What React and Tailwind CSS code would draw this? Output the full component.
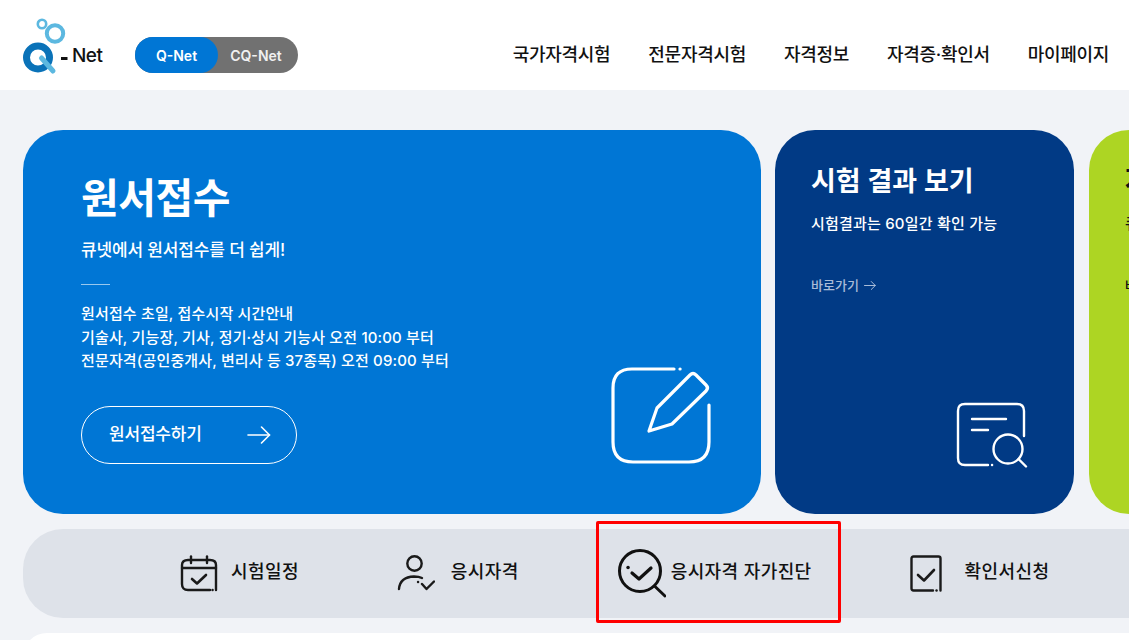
const font = { fontFamily: 'Inter, "Noto Sans CJK KR", sans-serif' };

function Logo() {
  return (
    <div className="relative w-[84px] h-[60px]">
      <svg width="84" height="60" viewBox="0 0 84 60" className="absolute left-0 top-0">
        <circle cx="19" cy="6" r="4.2" fill="none" stroke="#5cb8e0" strokeWidth="2.6" />
        <circle cx="32" cy="15.5" r="8.2" fill="none" stroke="#5cb8e0" strokeWidth="4" />
        <circle cx="15" cy="39.5" r="11.5" fill="none" stroke="#0a72b8" strokeWidth="7" />
        <path d="M18.5 40 L30 53" stroke="#5cb8e0" strokeWidth="5" strokeLinecap="round" />
        <rect x="38" y="39" width="6.5" height="3" fill="#111" />
      </svg>
      <span className="absolute left-[49px] top-[25px] text-[19px] leading-[26px] font-medium text-[#111] tracking-[-0.5px]">Net</span>
    </div>
  );
}

function EditIcon() {
  return (
    <svg width="102" height="100" viewBox="0 0 102 100" fill="none" stroke="#fff" strokeWidth="3.2" strokeLinecap="round" strokeLinejoin="round">
      <path d="M64 3 H22 Q3 3 3 22 V76 Q3 96 23 96 H79 Q99 96 99 76 V39" />
      <path d="M70 3 h0.1" />
      <path d="M47 42 L80 9 Q83 6 86 9 L96 19 Q99 22 96 25 L62 58 L39 65 Z" />
    </svg>
  );
}

function ResultIcon() {
  return (
    <svg width="72" height="66" viewBox="0 0 72 66" fill="none" stroke="#fff" strokeWidth="2.4" strokeLinecap="round" strokeLinejoin="round">
      <path d="M32 63 H9 Q2 63 2 56 V9 Q2 2 9 2 H61 Q68 2 68 9 V34" />
      <path d="M36 63 h0.1" />
      <path d="M16 17 H50" />
      <path d="M16 28 H32" />
      <circle cx="52" cy="47" r="14.5" />
      <path d="M62.5 57 L70 64.5" />
    </svg>
  );
}

function CalendarIcon() {
  return (
    <svg width="38" height="38" viewBox="0 0 38 38" fill="none" stroke="#1a1a1a" strokeWidth="2.4" strokeLinecap="round" strokeLinejoin="round">
      <path d="M30 35 H8 Q2 35 2 29 V10 Q2 5 8 5 H30 Q36 5 36 10 V35" />
      <path d="M2 13 H36" />
      <path d="M11 1.5 V8" />
      <path d="M27 1.5 V8" />
      <path d="M12 24 L17 28.5 L26 20" strokeWidth="2.6" />
      <path d="M32.5 35 h0.1" />
    </svg>
  );
}

function PersonIcon() {
  return (
    <svg width="38" height="38" viewBox="0 0 38 38" fill="none" stroke="#1a1a1a" strokeWidth="2.4" strokeLinecap="round" strokeLinejoin="round">
      <circle cx="17.5" cy="9.5" r="7.2" />
      <path d="M2 35 Q3 23 17 22.5 Q22 22.5 25 24" />
      <path d="M21 28 h0.1" />
      <path d="M25 30 L29.5 35 L37 27.5" />
    </svg>
  );
}

function SearchCheckIcon() {
  return (
    <svg width="50" height="50" viewBox="0 0 50 50" fill="none" stroke="#111" strokeWidth="3" strokeLinecap="round" strokeLinejoin="round">
      <circle cx="24" cy="22" r="20.5" />
      <path d="M38.5 37 L49 47" />
      <path d="M16 24 L23 30 L35 19" strokeWidth="3.2" />
      <path d="M12 18.5 h0.1" strokeWidth="3.4" />
    </svg>
  );
}

function CheckDocIcon() {
  return (
    <svg width="32" height="37" viewBox="0 0 32 37" fill="none" stroke="#1a1a1a" strokeWidth="2.4" strokeLinecap="round" strokeLinejoin="round">
      <path d="M23 35.5 H3.5 Q1.5 35.5 1.5 33.5 V3.5 Q1.5 1.5 3.5 1.5 H28.5 Q30.5 1.5 30.5 3.5 V35.5" />
      <path d="M8 20 L14 25.5 L24 15" strokeWidth="2.6" />
      <path d="M26.5 35.5 h0.1" />
    </svg>
  );
}

function Arrow({ size = 24, color = '#fff', sw = 1.6 }) {
  return (
    <svg width={size} height={size * 0.75} viewBox="0 0 24 18" fill="none" stroke={color} strokeWidth={sw} strokeLinecap="round" strokeLinejoin="round">
      <path d="M1 9 H22.5" />
      <path d="M14.5 1 L22.5 9 L14.5 17" />
    </svg>
  );
}

const navItems = ['국가자격시험', '전문자격시험', '자격정보', '자격증·확인서', '마이페이지'];

export default function App() {
  return (
    <div style={font} className="relative w-[1129px] h-[640px] overflow-hidden bg-[#f1f3f7]">
      <header className="h-[90px] pt-5 bg-white flex items-center pl-[23px] pr-5">
        <div className="mb-[14px]"><Logo /></div>
        <div className="ml-7 flex h-9 w-[163px] rounded-full bg-[#717171] text-[14px] font-semibold text-white">
          <span className="w-[83px] rounded-full bg-[#0076d5] flex items-center justify-center">Q-Net</span>
          <span className="flex-1 flex items-center justify-center pr-1 text-[#f0f0f0]">CQ-Net</span>
        </div>
        <nav className="ml-auto flex gap-[38px] text-[18px] font-medium text-[#111] tracking-[-0.3px] mt-[-2px]">
          {navItems.map((n) => <span key={n}>{n}</span>)}
        </nav>
      </header>

      <section className="mt-10 flex gap-[14px] pl-[23px] h-[384px]">
        <div className="relative w-[738px] shrink-0 rounded-[40px] bg-[#0076d5] text-white pl-[58px] pt-10">
          <h2 className="text-[41px] leading-[56px] font-bold tracking-[-0.5px]">원서접수</h2>
          <p className="mt-3 text-[17px] leading-6 font-medium tracking-[-0.15px]">큐넷에서 원서접수를 더 쉽게!</p>
          <div className="mt-[22px] w-[29px] h-px bg-white/60" />
          <div className="mt-[17px] text-[15px] leading-[23.5px] font-medium tracking-[0.15px]">
            <p>원서접수 초일, 접수시작 시간안내</p>
            <p>기술사, 기능장, 기사, 정기·상시 기능사 오전 10:00 부터</p>
            <p>전문자격(공인중개사, 변리사 등 37종목) 오전 09:00 부터</p>
          </div>
          <a className="mt-[33.5px] flex items-center justify-between w-[216px] h-[58px] rounded-full border border-white pl-[27px] pr-[25px] text-[17px] font-medium tracking-[-0.2px]">
            <span>원서접수하기</span>
            <Arrow />
          </a>
          <div className="absolute right-[49px] bottom-[48px]"><EditIcon /></div>
        </div>

        <div className="relative w-[299px] shrink-0 rounded-[40px] bg-[#013a85] text-white pl-9 pt-[30px]">
          <h3 className="text-[27px] leading-[42px] font-semibold translate-y-px">시험 결과 보기</h3>
          <p className="mt-[11px] text-[15px] leading-[22px] font-medium tracking-[0.2px]">시험결과는 60일간 확인 가능</p>
          <a className="mt-[40px] flex items-center gap-[5px] text-[13px] leading-5 font-medium text-[#a9bcd8]">
            바로가기 <Arrow size={12} color="#a9bcd8" sw={2} />
          </a>
          <div className="absolute right-[46px] bottom-[46px]"><ResultIcon /></div>
        </div>

        <div className="shrink-0 w-[299px] ml-[1px] rounded-[40px] bg-[#add523] text-[#111] pl-9 pt-[30px]">
          <h3 className="text-[27px] leading-[42px] font-semibold">자격증 발급</h3>
          <p className="mt-[11px] text-[15px] leading-[22px] font-medium">큐넷에서 간편하게 신청</p>
          <a className="mt-[40px] block text-[13px] leading-5 font-medium">바로가기</a>
        </div>
      </section>

      <section className="mt-[15px] ml-[23px] h-[89px] rounded-l-[40px] bg-[#dee2e9] flex items-center text-[#111] text-[18px] font-medium tracking-[0.4px]">
        <div className="flex items-center ml-[157px] gap-[13px]">
          <span className="flex"><CalendarIcon /></span>
          <span className="mt-[-4px]">시험일정</span>
        </div>
        <div className="flex items-center ml-[98px] gap-4">
          <span className="flex mt-[-2px]"><PersonIcon /></span>
          <span className="mt-[-4px]">응시자격</span>
        </div>
        <div className="flex items-center ml-[97px] gap-[5px]">
          <span className="flex mt-[1px]"><SearchCheckIcon /></span>
          <span className="mt-[-4px]">응시자격 자가진단</span>
        </div>
        <div className="flex items-center ml-[98px] gap-[23px]">
          <span className="flex"><CheckDocIcon /></span>
          <span className="mt-[-4px]">확인서신청</span>
        </div>
      </section>

      <section className="mt-[15px] ml-[23px] h-[60px] rounded-tl-[24px] bg-white" />

      <div className="absolute left-[596px] top-[521px] w-[245px] h-[102px] border-[3px] border-[#ff0000] rounded-[2px]" />
    </div>
  );
}
